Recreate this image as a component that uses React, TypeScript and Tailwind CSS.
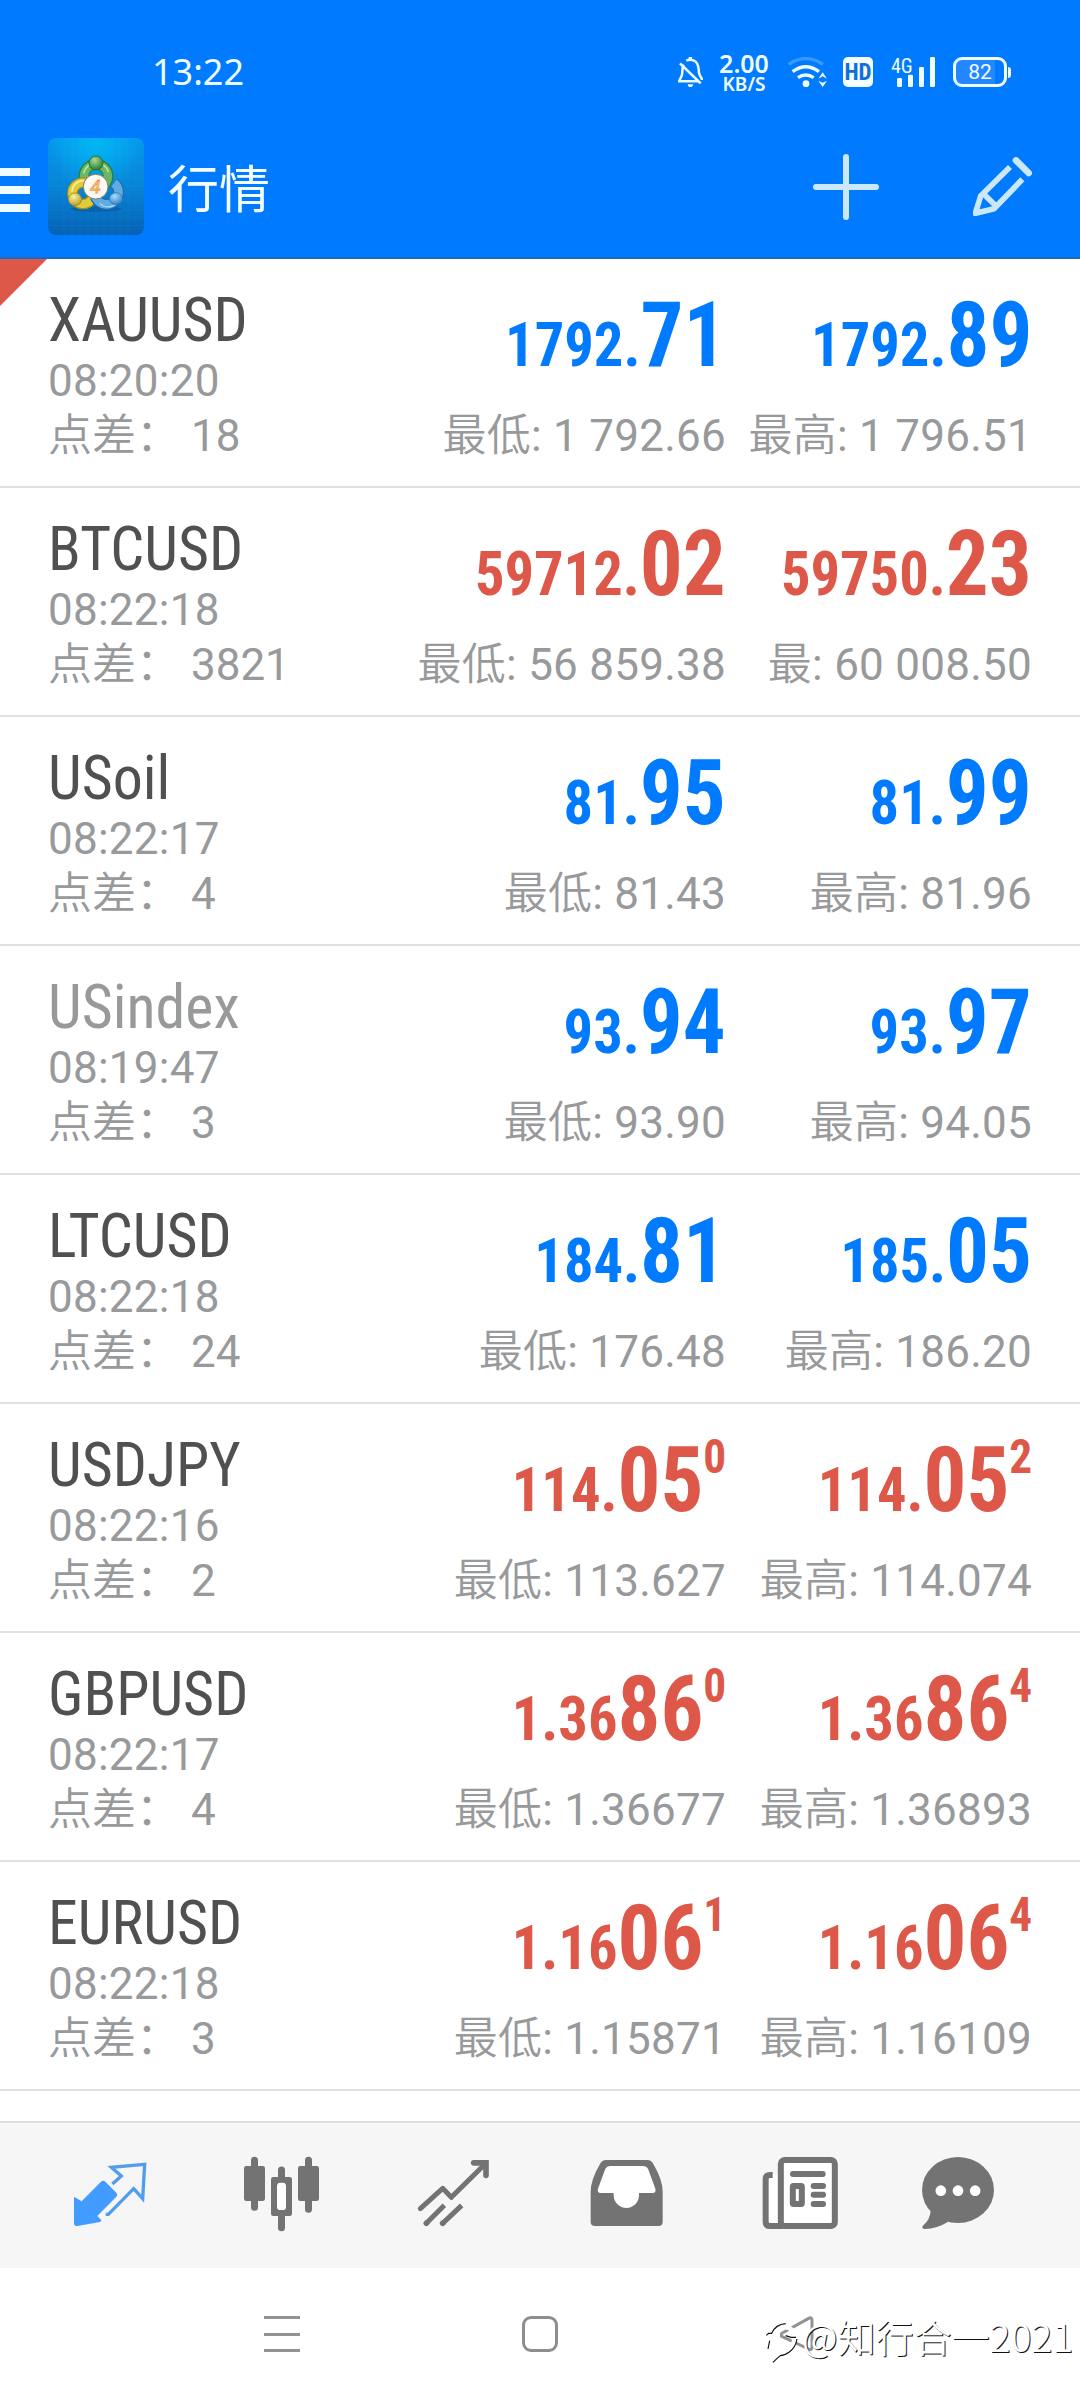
import { ReactNode } from "react";

type Price = { small: string; big: string; sup?: string };

type Quote = {
  symbol: string;
  time: string;
  spread: string;
  bid: Price;
  ask: Price;
  low: string;
  high: string;
  highLabel?: string;
  down?: boolean;
  muted?: boolean;
};

const quotes: Quote[] = [
  {
    symbol: "XAUUSD",
    time: "08:20:20",
    spread: "18",
    bid: { small: "1792.", big: "71" },
    ask: { small: "1792.", big: "89" },
    low: "1 792.66",
    high: "1 796.51",
  },
  {
    symbol: "BTCUSD",
    time: "08:22:18",
    spread: "3821",
    bid: { small: "59712.", big: "02" },
    ask: { small: "59750.", big: "23" },
    low: "56 859.38",
    high: "60 008.50",
    highLabel: "最",
    down: true,
  },
  {
    symbol: "USoil",
    time: "08:22:17",
    spread: "4",
    bid: { small: "81.", big: "95" },
    ask: { small: "81.", big: "99" },
    low: "81.43",
    high: "81.96",
  },
  {
    symbol: "USindex",
    time: "08:19:47",
    spread: "3",
    bid: { small: "93.", big: "94" },
    ask: { small: "93.", big: "97" },
    low: "93.90",
    high: "94.05",
    muted: true,
  },
  {
    symbol: "LTCUSD",
    time: "08:22:18",
    spread: "24",
    bid: { small: "184.", big: "81" },
    ask: { small: "185.", big: "05" },
    low: "176.48",
    high: "186.20",
  },
  {
    symbol: "USDJPY",
    time: "08:22:16",
    spread: "2",
    bid: { small: "114.", big: "05", sup: "0" },
    ask: { small: "114.", big: "05", sup: "2" },
    low: "113.627",
    high: "114.074",
    down: true,
  },
  {
    symbol: "GBPUSD",
    time: "08:22:17",
    spread: "4",
    bid: { small: "1.36", big: "86", sup: "0" },
    ask: { small: "1.36", big: "86", sup: "4" },
    low: "1.36677",
    high: "1.36893",
    down: true,
  },
  {
    symbol: "EURUSD",
    time: "08:22:18",
    spread: "3",
    bid: { small: "1.16", big: "06", sup: "1" },
    ask: { small: "1.16", big: "06", sup: "4" },
    low: "1.15871",
    high: "1.16109",
    down: true,
  },
];

const Cjk = ({ children }: { children: ReactNode }) => (
  <span className="font-['Noto_Sans_CJK_SC',sans-serif] font-[350] leading-none">
    {children}
  </span>
);

const PriceText = ({ price }: { price: Price }) => (
  <div className="flex h-[90px] origin-right scale-x-[0.944] items-baseline justify-end font-['Roboto_Condensed','Roboto',sans-serif] font-bold leading-none tracking-normal">
    <span className="text-[62px] leading-none">{price.small}</span>
    <span className="text-[90px] leading-none">{price.big}</span>
    {price.sup && (
      <span className="-mt-[3px] self-start text-[48px] leading-none">
        {price.sup}
      </span>
    )}
  </div>
);

const QuoteRow = ({ quote }: { quote: Quote }) => (
  <div className="flex h-[229px] whitespace-nowrap border-b-2 border-[#e1e1e1] pr-12 pl-12 text-[44px] tracking-[0.25px] text-[#98999b]">
    <div className="flex-1 pt-[27px]">
      <div
        className={`origin-left scale-x-[0.967] font-['Roboto_Condensed','Roboto',sans-serif] text-[62px] leading-[68px] tracking-normal ${
          quote.muted ? "text-[#98999b]" : "text-[#505050]"
        }`}
      >
        {quote.symbol}
      </div>
      <div className="leading-[54px]">{quote.time}</div>
      <div className="leading-[56px] tracking-normal">
        <Cjk>点差：</Cjk> {quote.spread}
      </div>
    </div>
    {[
      { price: quote.bid, label: "最低", value: quote.low },
      { price: quote.ask, label: quote.highLabel ?? "最高", value: quote.high },
    ].map(({ price, label, value }, idx) => (
      <div
        key={idx}
        className={`flex w-[306px] flex-col items-end pt-8 ${
          quote.down ? "text-[#de584a]" : "text-[#007aff]"
        }`}
      >
        <PriceText price={price} />
        <div className="mt-[27px] leading-[56px] text-[#98999b]">
          <Cjk>{label}</Cjk>: {value}
        </div>
      </div>
    ))}
  </div>
);

const StatusBar = () => (
  <div className="flex h-[138px] items-center pt-1.5 pr-[69px] pl-[152px] text-[#effcff]">
    <span className="mr-auto font-['Noto_Sans',sans-serif] text-[36px] leading-none">
      13:22
    </span>
    <svg className="h-[30px] w-[25px]" viewBox="114 81 75 90" fill="none">
      <path
        d="M131 104C126 112 128 122 126 134C125 143 118 146 118 154H174M139 92Q150 87 162 92C178 99 175 117 177 128C178 138 186 143 186 150"
        stroke="currentColor"
        strokeWidth="7.5"
      />
      <path d="M120 100L182 160" stroke="currentColor" strokeWidth="8" />
      <path d="M143 163H160Q157 172 151 172Q145 172 143 163ZM146 81H156V91H146Z" fill="currentColor" />
    </svg>
    <div className="ml-4 flex w-[50px] flex-col items-center gap-0.5 pt-0.5 font-['Noto_Sans',sans-serif] leading-none">
      <span className="text-[25px] font-semibold leading-[20px]">2.00</span>
      <span className="text-[19px] font-semibold leading-[19px]">KB/S</span>
    </div>
    <svg className="ml-[18px] h-[30px] w-10" viewBox="441 81 120 90" fill="none" stroke="currentColor">
      <path d="M446 103Q497 69 549 103" strokeWidth="10" opacity=".25" />
      <path d="M458 125Q497 95 537 125" strokeWidth="10" />
      <path d="M474 143Q497 127 521 143" strokeWidth="10" />
      <circle cx="498" cy="161" r="10" fill="currentColor" stroke="none" />
      <path d="M535 146L548 127L561 146L548 139ZM535 152L548 158L561 152L548 171Z" fill="currentColor" stroke="none" />
    </svg>
    <span className="ml-4 flex size-[30px] items-center justify-center rounded-[5px] bg-[#f4fdff] font-['Roboto_Condensed','Roboto',sans-serif] text-[23px] font-bold leading-none text-[#0f6fdc]">
      HD
    </span>
    <div className="relative ml-[18px] h-[30px] w-11">
      <span className="absolute -top-px left-0 font-['Roboto_Condensed','Roboto',sans-serif] text-[20px] leading-none">
        4G
      </span>
      <svg className="size-full" viewBox="753 81 132 90" fill="currentColor">
        <rect x="771" y="144" width="15" height="27" rx="4" />
        <rect x="804" y="134" width="15" height="37" rx="4" />
        <rect x="837" y="111" width="15" height="60" rx="4" />
        <rect x="870" y="81" width="15" height="90" rx="4" />
      </svg>
    </div>
    <div className="ml-[18px] flex items-center">
      <div className="flex h-[30px] w-[54px] items-center justify-center rounded-[9px] border-[3px] border-[#effcff] bg-linear-to-r from-[#2388ff] from-82% to-[#007aff] to-82% font-['Roboto',sans-serif] text-[21px] leading-none">
        82
      </div>
      <div className="ml-px h-[11px] w-[3px] rounded-r-sm bg-[#effcff]" />
    </div>
  </div>
);

const Logo = () => (
  <svg className="ml-[18px] h-[97px] w-24" viewBox="24 25 288 291">
    <defs>
      <linearGradient id="sky" x1="0" y1="0" x2="0" y2="1">
        <stop offset="0" stopColor="#0796ee" />
        <stop offset=".5" stopColor="#0784d6" />
        <stop offset="1" stopColor="#0662b4" />
      </linearGradient>
      <radialGradient id="glow" cx=".5" cy=".05" r=".5">
        <stop offset="0" stopColor="#00bdf5" stopOpacity=".85" />
        <stop offset="1" stopColor="#00bdf5" stopOpacity="0" />
      </radialGradient>
      <radialGradient id="green" cx=".4" cy=".3" r=".75">
        <stop offset="0" stopColor="#a5dd96" />
        <stop offset="1" stopColor="#23792d" />
      </radialGradient>
      <radialGradient id="yellow" cx=".4" cy=".3" r=".75">
        <stop offset="0" stopColor="#faf0a0" />
        <stop offset="1" stopColor="#b59a1c" />
      </radialGradient>
      <radialGradient id="blue" cx=".4" cy=".3" r=".75">
        <stop offset="0" stopColor="#a8dcfa" />
        <stop offset="1" stopColor="#2a7cc4" />
      </radialGradient>
    </defs>
    <rect x="24" y="25" width="288" height="291" rx="24" fill="url(#sky)" />
    <rect x="24" y="25" width="288" height="291" rx="24" fill="url(#glow)" />
    <path
      d="M72 25V316M96 25V316M120 25V316M144 25V316M168 25V316M192 25V316M216 25V316M240 25V316M264 25V316M24 72H312M24 96H312M24 120H312M24 144H312M24 168H312M24 192H312M24 216H312M24 240H312M24 264H312M24 288H312"
      stroke="#4fc4f5"
      strokeOpacity=".13"
      strokeWidth="2"
    />
    <ellipse cx="168" cy="238" rx="78" ry="8" fill="#04437f" opacity=".35" />
    <g fill="none">
      <circle cx="168" cy="140" r="36" stroke="#2d7d35" strokeWidth="32" />
      <circle cx="168" cy="140" r="36" stroke="#6bb864" strokeWidth="25" />
      <path d="M131 131A38 38 0 0 1 205 127" stroke="#bce5ab" strokeWidth="5" />
      <circle cx="129" cy="191" r="32" stroke="#a08c1e" strokeWidth="32" />
      <circle cx="129" cy="191" r="32" stroke="#e0cc38" strokeWidth="25" />
      <path d="M96 186A34 34 0 0 1 132 153" stroke="#f7efa0" strokeWidth="5" />
      <path d="M165 198A36 36 0 1 0 222 160" stroke="#2468a5" strokeWidth="33" />
      <path d="M165 198A36 36 0 1 0 222 160" stroke="#61abe3" strokeWidth="26" />
      <path d="M180 221A33 33 0 0 0 234 213" stroke="#a6d7f7" strokeWidth="4" />
    </g>
    <circle cx="168" cy="100" r="21" fill="url(#green)" stroke="#28702c" strokeWidth="3" />
    <ellipse cx="105" cy="209" rx="20" ry="19" fill="url(#yellow)" stroke="#8f8020" strokeWidth="2" />
    <ellipse cx="228" cy="207" rx="20" ry="18" fill="url(#blue)" stroke="#2a6faa" strokeWidth="2" />
    <circle cx="167" cy="171" r="37" fill="#fbf9f2" stroke="#867b62" strokeWidth="3" />
    <text
      x="166"
      y="190"
      textAnchor="middle"
      fontFamily="Roboto, sans-serif"
      fontSize="57"
      fontStyle="italic"
      fill="#fbd9a8"
      stroke="#eea050"
      strokeWidth="2.5"
    >
      4
    </text>
  </svg>
);

const TitleBar = () => (
  <div className="flex h-[97px] items-center pr-12">
    <div className="flex w-[30px] flex-col gap-2.5 pt-1.5">
      <div className="h-2 bg-[#effcff]" />
      <div className="h-2 bg-[#effcff]" />
      <div className="h-2 bg-[#effcff]" />
    </div>
    <Logo />
    <h1 className="ml-6 font-['Noto_Sans_CJK_SC',sans-serif] text-[51px] leading-none text-[#f4fdff]">
      行情
    </h1>
    <svg className="ml-auto size-[66px]" viewBox="519 372 198 198" stroke="#cbe8fb" strokeWidth="18" strokeLinecap="round">
      <path d="M528 471H708M618 381V561" />
    </svg>
    <svg className="ml-[94px] size-[59px]" viewBox="999 380 177 177" fill="none" stroke="#cbe8fb" strokeWidth="17">
      <path d="M1110 410L1022 497L1006 549L1062 535L1147 447" strokeLinejoin="round" />
      <path d="M1028 488L1068 527" />
      <path d="M1128 390L1166 428" strokeWidth="20" strokeLinecap="round" />
    </svg>
  </div>
);

const TabBar = () => (
  <div className="flex h-[147px] border-t-2 border-[#dedede] bg-[#f6f6f6] pt-8 pl-[72px] text-[#737373]">
    <svg className="size-[76px]" viewBox="216 135 228 228">
      <path
        d="M222 260L245 274L303 215Q310 209 316 215L349 248Q354 254 349 260L292 318L304 330Q304 335 300 336L232 348Q222 349 222 338Z"
        fill="#429bff"
      />
      <path
        d="M337 222L364 198L334 172L434 163L428 266L401 236L325 313H317"
        fill="none"
        stroke="#539ded"
        strokeWidth="10"
      />
    </svg>
    <svg className="ml-[95px] size-[76px] overflow-visible" viewBox="729 135 228 228" fill="currentColor">
      <path
        d="M763.5 151V292M844.5 180V353M925.5 151V298"
        stroke="currentColor"
        strokeWidth="21"
        strokeLinecap="round"
      />
      <rect x="732" y="168" width="63" height="105" rx="7" />
      <rect x="813" y="201" width="63" height="117" rx="7" />
      <rect x="894" y="168" width="63" height="105" rx="7" />
      <rect x="831" y="218" width="27" height="82" rx="10" fill="#fff" />
    </svg>
    <svg className="ml-[97px] size-[76px]" viewBox="168 135 228 228" fill="none" stroke="currentColor" strokeWidth="15">
      <path d="M181 296L248 235L274 262L376 161" strokeLinecap="round" strokeLinejoin="round" />
      <path d="M341 158.5H378V196" strokeWidth="17" strokeLinecap="round" />
      <path d="M253 286L199 340M305 286L248 340" />
      <path d="M199 340L200 339M248 340L249 339" strokeWidth="17" strokeLinecap="round" />
    </svg>
    <svg className="ml-[97px] size-[76px]" viewBox="687 135 228 228">
      <path
        d="M738 150H862Q874 150 880 162Q908 210 908 245V335Q908 348 895 348H705Q692 348 692 335V245Q692 210 720 162Q726 150 738 150Z"
        fill="currentColor"
      />
      <path
        d="M750 168H850Q860 168 864 176L886 236Q889 249 878 249H837V256A38 38 0 0 1 761 256V249H722Q711 249 714 236L736 176Q740 168 750 168Z"
        fill="#fff"
      />
    </svg>
    <svg className="ml-[97px] size-[76px]" viewBox="126 135 228 228" fill="none" stroke="currentColor" strokeWidth="18">
      <path d="M158 195H150Q137 195 137 208V335Q137 348 150 348H182V195" stroke="none" fill="#fff" />
      <path d="M158 195H150Q137 195 137 208V335Q137 348 150 348H190" />
      <rect x="182.5" y="150" width="162" height="198" rx="12" fill="#fff" />
      <path d="M219 192H308M281 228H309M281 254H309M281 282H309" strokeLinecap="round" />
      <rect x="218.5" y="228" width="27" height="54" rx="2" fill="#fff" />
    </svg>
    <svg className="ml-[82px] size-[76px]" viewBox="600 135 228 228" fill="currentColor">
      <ellipse cx="714" cy="240" rx="108" ry="99" />
      <path d="M632 300Q632 328 608 348Q604 357 615 357Q650 356 685 335Z" />
      <circle cx="662.5" cy="242" r="16" fill="#fff" />
      <circle cx="714" cy="242" r="16" fill="#fff" />
      <circle cx="765.5" cy="242" r="16" fill="#fff" />
    </svg>
  </div>
);

const NavBar = () => (
  <div className="relative flex h-[132px] items-start bg-white pt-12 pl-[264px]">
    <div className="flex h-9 w-9 flex-col justify-between">
      <div className="h-[3px] bg-[#929292]" />
      <div className="h-[3px] bg-[#929292]" />
      <div className="h-[3px] bg-[#929292]" />
    </div>
    <div className="ml-[222px] size-9 rounded-[9px] border-[3px] border-[#8e8e8e]" />
    <svg className="ml-[222px] size-9" viewBox="0 0 108 108" fill="none" stroke="#929292" strokeWidth="9">
      <path d="M7 62Q-2 57 7 51L86 7Q96 2 96 14V92Q96 104 86 99Z" />
    </svg>
    <div className="absolute top-[39px] right-[7px] flex items-center text-white antialiased">
      <svg className="mt-2 h-[50px] w-[37px] overflow-visible" viewBox="0 0 111 150" fill="none">
        <path
          d="M6 104L12 68Q28 30 72 38Q96 52 84 92Q70 128 26 150"
          stroke="#fff"
          strokeWidth="14"
        />
        <path
          d="M4 61L11 55L20 55Q32 28 62 26M9 102L14 77M62 62L78 67H93M96 72Q92 98 72 112Q58 122 46 122Q36 130 24 142"
          stroke="#111"
          strokeWidth="3.5"
        />
      </svg>
      <span className="font-['Noto_Sans_CJK_SC',sans-serif] text-[38px] font-[350] leading-none whitespace-nowrap [text-shadow:1px_1px_0.5px_#111]">
        @知行合一2021
      </span>
    </div>
  </div>
);

export default function App() {
  return (
    <div className="flex h-[2400px] w-[1080px] flex-col overflow-hidden bg-white font-['Roboto',sans-serif]">
      <header className="h-[259px] border-b-2 border-[#1b6cc0] bg-[#007aff]">
        <StatusBar />
        <TitleBar />
      </header>
      <main className="relative flex-1">
        <svg className="absolute top-0 left-0 size-[47px]" viewBox="0 0 47 47">
          <path d="M0 0H47L0 47Z" fill="#de584a" />
        </svg>
        {quotes.map((quote) => (
          <QuoteRow key={quote.symbol} quote={quote} />
        ))}
      </main>
      <TabBar />
      <NavBar />
    </div>
  );
}
